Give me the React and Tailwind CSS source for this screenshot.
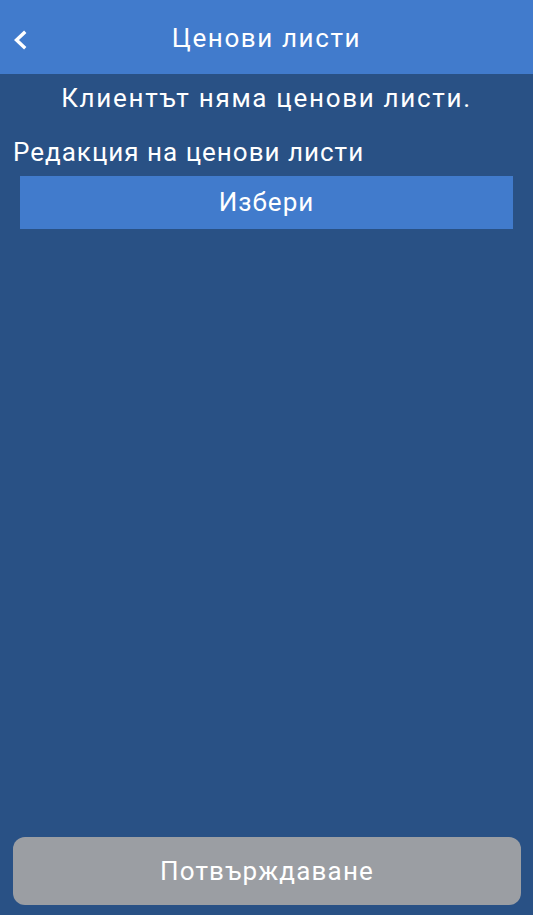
import React from 'react';

const App = () => {
  return (
    <div
      className="w-[533px] h-[915px] bg-[#295185] flex flex-col text-white"
      style={{ fontFamily: 'Roboto, "Noto Sans", sans-serif' }}
    >
      <div className="h-[74px] bg-[#417bcc] relative flex items-center justify-center shrink-0">
        <button className="absolute left-[11px] top-[30px] w-[18px] h-[20px] flex items-center justify-center">
          <svg width="18" height="20" viewBox="0 0 18 20" fill="none">
            <path d="M13 3L5.5 10L13 17" stroke="white" strokeWidth="3.4" strokeLinecap="square" />
          </svg>
        </button>
        <h1 className="text-[26px] leading-none mt-[2px] tracking-[1.6px]">Ценови листи</h1>
      </div>

      <div className="flex flex-col flex-1">
        <p className="text-center text-[26px] leading-[28px] pt-[10px] tracking-[1.7px]">Клиентът няма ценови листи.</p>
        <p className="text-[26px] leading-[28px] pl-[13px] mt-[26px] tracking-[1px]">Редакция на ценови листи</p>
        <div className="px-[20px] mt-[10px]">
          <button className="w-full h-[53px] bg-[#417bcc] text-[26px] tracking-[1px] flex items-center justify-center">
            Избери
          </button>
        </div>
      </div>

      <div className="pl-[13px] pr-[12px] pb-[10px]">
        <button className="w-full h-[68px] rounded-[12px] bg-[#9b9ea3] text-[26px] tracking-[1.2px] flex items-center justify-center">
          Потвърждаване
        </button>
      </div>
    </div>
  );
};

export default App;
